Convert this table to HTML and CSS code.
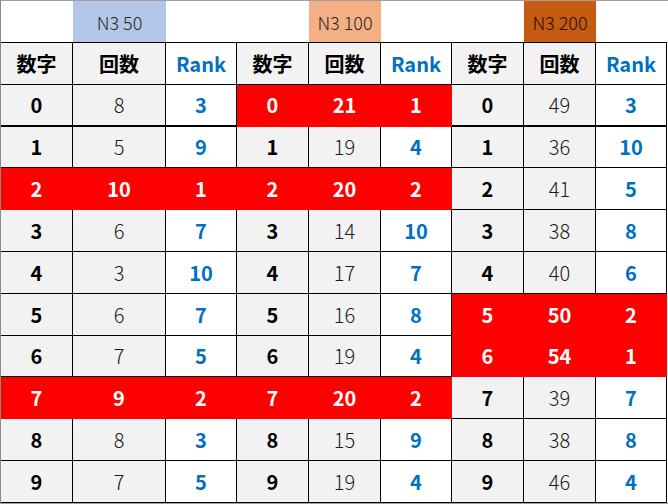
FILE: index.html
```html
<!DOCTYPE html>
<html lang="ja">
<head>
<meta charset="utf-8">
<title>N3</title>
<link rel="stylesheet" href="styles.css">
</head>
<body>
<div class="sheet">
  <div class="top"></div><div class="top lbl blue">N3 50</div><div class="top"></div>
  <div class="top"></div><div class="top lbl peach">N3 100</div><div class="top"></div>
  <div class="top"></div><div class="top lbl brown">N3 200</div><div class="top"></div>

  <div class="c g d">数字</div><div class="c g d">回数</div><div class="c r">Rank</div>
  <div class="c g d">数字</div><div class="c g d">回数</div><div class="c r">Rank</div>
  <div class="c g d">数字</div><div class="c g d">回数</div><div class="c r">Rank</div>

  <div class="c g d thick">0</div><div class="c g n thick">8</div><div class="c r thick">3</div>
  <div class="c red thick">0</div><div class="c red thick">21</div><div class="c red thick">1</div>
  <div class="c g d thick">0</div><div class="c g n thick">49</div><div class="c r thick">3</div>

  <div class="c g d">1</div><div class="c g n">5</div><div class="c r">9</div>
  <div class="c g d">1</div><div class="c g n">19</div><div class="c r">4</div>
  <div class="c g d">1</div><div class="c g n">36</div><div class="c r">10</div>

  <div class="c red">2</div><div class="c red">10</div><div class="c red">1</div>
  <div class="c red">2</div><div class="c red">20</div><div class="c red">2</div>
  <div class="c g d">2</div><div class="c g n">41</div><div class="c r">5</div>

  <div class="c g d">3</div><div class="c g n">6</div><div class="c r">7</div>
  <div class="c g d">3</div><div class="c g n">14</div><div class="c r">10</div>
  <div class="c g d">3</div><div class="c g n">38</div><div class="c r">8</div>

  <div class="c g d">4</div><div class="c g n">3</div><div class="c r">10</div>
  <div class="c g d">4</div><div class="c g n">17</div><div class="c r">7</div>
  <div class="c g d">4</div><div class="c g n">40</div><div class="c r">6</div>

  <div class="c g d">5</div><div class="c g n">6</div><div class="c r">7</div>
  <div class="c g d">5</div><div class="c g n">16</div><div class="c r">8</div>
  <div class="c red">5</div><div class="c red">50</div><div class="c red">2</div>

  <div class="c g d">6</div><div class="c g n">7</div><div class="c r">5</div>
  <div class="c g d">6</div><div class="c g n">19</div><div class="c r">4</div>
  <div class="c red">6</div><div class="c red">54</div><div class="c red">1</div>

  <div class="c red">7</div><div class="c red">9</div><div class="c red">2</div>
  <div class="c red">7</div><div class="c red">20</div><div class="c red">2</div>
  <div class="c g d">7</div><div class="c g n">39</div><div class="c r">7</div>

  <div class="c g d">8</div><div class="c g n">8</div><div class="c r">3</div>
  <div class="c g d">8</div><div class="c g n">15</div><div class="c r">9</div>
  <div class="c g d">8</div><div class="c g n">38</div><div class="c r">8</div>

  <div class="c g d">9</div><div class="c g n">7</div><div class="c r">5</div>
  <div class="c g d">9</div><div class="c g n">19</div><div class="c r">4</div>
  <div class="c g d">9</div><div class="c g n">46</div><div class="c r">4</div>
</div>
</body>
</html>
```

FILE: styles.css
```css
html, body {
  margin: 0;
  padding: 0;
  background: #ffffff;
}

.sheet {
  width: 668px;
  height: 504px;
  box-sizing: border-box;
  border-top: 1px solid #a0a0a0;
  border-left: 1px solid #8a8a8a;
  border-bottom: 1px solid #a0a0a0;
  display: grid;
  grid-template-columns: 72px 93px 71px 72px 72px 71px 72px 72px 71px;
  grid-template-rows: 42px 42px 42px 41px 42px 42px 42px 42px 41px 42px 42px 42px;
  font-family: "Noto Sans CJK JP", "Noto Sans", sans-serif;
  font-size: 20px;
}

.top {
  border-bottom: 1px solid #000;
  background: #fff;
}

.lbl {
  display: flex;
  align-items: center;
  justify-content: center;
  font-size: 18px;
  font-weight: 300;
  color: #262626;
}

.blue { background: #b4c6e7; }
.peach { background: #f4b084; }
.brown { background: #c55a11; color: #1f0f05; }

.c {
  box-sizing: border-box;
  border-right: 1px solid #000;
  border-bottom: 1px solid #000;
  display: flex;
  align-items: center;
  justify-content: center;
  background: #fff;
  line-height: 1;
}

.g { background: #f2f2f2; }

.d {
  font-weight: 700;
  color: #000;
}

.n {
  font-weight: 300;
  color: #1a1a1a;
}

.r {
  font-weight: 700;
  color: #0070c0;
}

.thick {
  border-bottom-width: 2px;
}

.red {
  background: #ff0000;
  border-color: #ff0000;
  color: #fff;
  font-weight: 700;
}
```
